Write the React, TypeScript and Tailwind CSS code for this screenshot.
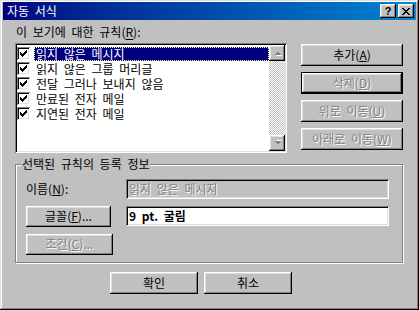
import React from 'react';

const raised =
  'shadow-[inset_-1px_-1px_#000,inset_1px_1px_#fff,inset_-2px_-2px_#808080,inset_2px_2px_#dfdfdf]';
const sunken =
  'shadow-[inset_1px_1px_#808080,inset_-1px_-1px_#fff,inset_2px_2px_#000,inset_-2px_-2px_#dfdfdf]';
const disabledText = 'text-[#808080] [text-shadow:1px_1px_0_#fff]';

const CHECK_ROWS: [number, number][][] = [
  [[6, 1]],
  [[5, 2]],
  [[0, 1], [4, 3]],
  [[0, 2], [3, 3]],
  [[0, 5]],
  [[1, 3]],
  [[2, 1]],
];

const CheckMark = () => (
  <svg width="7" height="7" viewBox="0 0 7 7" shapeRendering="crispEdges">
    {CHECK_ROWS.map((row, y) =>
      row.map(([x, w]) => <rect key={`${y}-${x}`} x={x} y={y} width={w} height={1} fill="#000" />)
    )}
  </svg>
);

const Arrow = ({ down }: { down?: boolean }) => (
  <svg width="9" height="6" viewBox="0 0 9 6" shapeRendering="crispEdges">
    <g transform={down ? 'translate(0,6) scale(1,-1)' : undefined}>
      <polygon points="1,5 8,5 4.5,1.5" fill="#fff" transform="translate(1,1)" />
      <polygon points="1,5 8,5 4.5,1.5" fill="#808080" />
    </g>
  </svg>
);

const rules = ['읽지 않은 메시지', '읽지 않은 그룹 머리글', '전달 그러나 보내지 않음', '만료된 전자 메일', '지연된 전자 메일'];

const Btn = ({ children, className = '', disabled }: { children: React.ReactNode; className?: string; disabled?: boolean }) => (
  <div className={`flex items-center justify-center bg-[#c0c0c0] ${raised} ${disabled ? disabledText : 'text-black'} ${className}`}>
    {children}
  </div>
);

export default function App() {
  return (
    <div className="w-[419px] h-[310px] bg-[#c0c0c0] p-[3px] pt-[2px] text-[12px] leading-[14px] text-black font-['Noto_Sans_CJK_KR','Liberation_Sans',sans-serif] [word-spacing:3px] shadow-[inset_-1px_-1px_#000,inset_1px_1px_#dfdfdf,inset_-2px_-2px_#808080,inset_2px_2px_#fff] overflow-hidden">
      {/* title bar */}
      <div className="h-[18px] flex items-center bg-gradient-to-r from-[#000080] to-[#1084d0] pl-[4px] pr-[2px]">
        <span className="text-white flex-1">자동 서식</span>
        <div className={`w-[16px] h-[14px] flex items-center justify-center bg-[#c0c0c0] ${raised} font-bold text-[11px] leading-none font-['Liberation_Sans',sans-serif]`}>?</div>
        <div className={`ml-[2px] w-[16px] h-[14px] flex items-center justify-center bg-[#c0c0c0] ${raised}`}>
          <svg width="8" height="7" viewBox="0 0 8 7" shapeRendering="crispEdges">
            <path d="M0 0h2v1h-2zM6 0h2v1h-2zM1 1h2v1h-2zM5 1h2v1h-2zM2 2h4v1h-4zM3 3h2v1h-2zM2 4h4v1h-4zM1 5h2v1h-2zM5 5h2v1h-2zM0 6h2v1h-2zM6 6h2v1h-2z" fill="#000" />
          </svg>
        </div>
      </div>

      <div className="pl-[12px] pt-[5px]">
        <div className="h-[14px] pl-[1px]">
          이 보기에 대한 규칙(<u className="underline-offset-2">R</u>):
        </div>

        <div className="flex mt-[4px]">
          {/* listbox */}
          <div className={`w-[272px] h-[110px] bg-white p-[2px] flex ${sunken}`}>
            <div className="flex-1 flex flex-col pt-[1px]">
              {rules.map((r, i) => (
                <div key={r} className="h-[15px] flex items-center leading-[12px]">
                  <div className={`w-[13px] h-[13px] bg-white flex items-center justify-center ${sunken}`}>
                    <CheckMark />
                  </div>
                  <div
                    className={`ml-[4px] flex-1 h-[14px] flex items-center pl-[1px] whitespace-nowrap ${
                      i === 0 ? 'bg-[#000080] text-white border border-dotted border-[#ffff80]' : 'border border-transparent'
                    }`}
                  >
                    {r}
                  </div>
                </div>
              ))}
            </div>
            {/* scrollbar */}
            <div className="w-[16px] flex flex-col">
              <div className={`h-[16px] flex items-center justify-center bg-[#c0c0c0] ${raised}`}>
                <Arrow />
              </div>
              <div className="flex-1 bg-[repeating-conic-gradient(#c0c0c0_0_25%,#fff_0_50%)] bg-[length:2px_2px]" />
              <div className={`h-[16px] flex items-center justify-center bg-[#c0c0c0] ${raised}`}>
                <Arrow down />
              </div>
            </div>
          </div>

          {/* right buttons */}
          <div className="ml-[14px] pt-[1px] flex flex-col gap-[6px]">
            <Btn className="w-[102px] h-[22px]">
              추가(<u>A</u>)
            </Btn>
            <div
              className={`w-[102px] h-[22px] flex items-center justify-center bg-[#c0c0c0] ${disabledText} shadow-[inset_0_0_0_1px_#000,inset_-2px_-2px_#000,inset_2px_2px_#fff,inset_-3px_-3px_#808080,inset_3px_3px_#dfdfdf]`}
            >
              삭제(<u>D</u>)
            </div>
            <Btn className="w-[102px] h-[22px]" disabled>
              위로 이동(<u>U</u>)
            </Btn>
            <Btn className="w-[102px] h-[22px]" disabled>
              아래로 이동(<u>W</u>)
            </Btn>
          </div>
        </div>

        {/* group box */}
        <div className="relative mt-[11px] w-[388px] h-[99px] border border-[#808080] shadow-[1px_1px_0_#fff,inset_1px_1px_0_#fff] pl-[10px] pt-[14px]">
          <span className="absolute -top-[8px] left-[5px] px-[1px] bg-[#c0c0c0]">선택된 규칙의 등록 정보</span>

          <div className="flex items-center h-[20px]">
            <div className="w-[100px]">
              이름(<u>N</u>):
            </div>
            <div className={`w-[263px] h-[20px] bg-[#c0c0c0] flex items-center pl-[3px] ${sunken} ${disabledText}`}>
              읽지 않은 메시지
            </div>
          </div>

          <div className="flex items-center h-[20px] mt-[7px]">
            <Btn className="w-[85px] h-[21px]">
              글꼴(<u>F</u>)...
            </Btn>
            <div className={`ml-[15px] w-[263px] h-[20px] bg-white flex items-center pl-[3px] font-bold ${sunken}`}>
              9 pt. 굴림
            </div>
          </div>

          <div className="flex items-center h-[20px] mt-[8px]">
            <Btn className="w-[87px] h-[21px]" disabled>
              조건(<u>C</u>)...
            </Btn>
          </div>
        </div>

        {/* dialog buttons */}
        <div className="flex gap-[6px] mt-[9px] ml-[95px]">
          <Btn className="w-[88px] h-[22px]">확인</Btn>
          <Btn className="w-[88px] h-[22px]">취소</Btn>
        </div>
      </div>
    </div>
  );
}
